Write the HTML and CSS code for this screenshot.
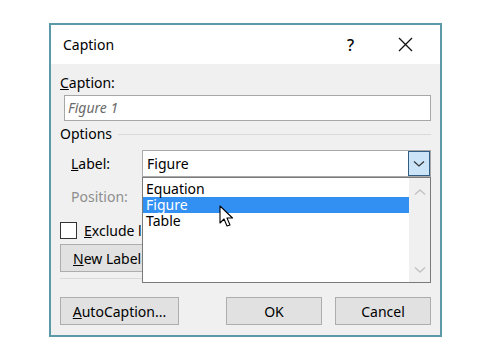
FILE: index.html
```html
<!DOCTYPE html>
<html lang="en">

<head>
    <meta charset="UTF-8">
    <title>Caption</title>
    <link rel="stylesheet" href="styles.css">
</head>

<body>

    <div class="dialog">
        <!-- Title bar -->
        <div class="titlebar">
            <div class="title">Caption</div>
            <div class="help">?</div>
            <div class="close">
                <svg width="15" height="15" viewBox="0 0 15 15">
                    <path d="M1 1 L14 14 M14 1 L1 14" stroke="#111" stroke-width="1.3" fill="none" />
                </svg>
            </div>
        </div>

        <div class="content">
            <div class="field-label"><u>C</u>aption:</div>
            <div class="caption-input">Figure 1</div>

            <div class="group-title">
                <span>Options</span>
                <div class="group-line"></div>
            </div>

            <div class="options">
                <div class="row">
                    <div class="row-label"><u>L</u>abel:</div>
                    <div class="combo">
                        <div class="combo-text">Figure</div>
                        <div class="combo-button">
                            <svg width="12" height="8" viewBox="0 0 12 8">
                                <path d="M1 1.5 L6 6 L11 1.5" stroke="#333" stroke-width="1.2" fill="none" />
                            </svg>
                        </div>

                        <!-- Open drop-down list -->
                        <div class="dropdown">
                            <div class="items">
                                <div class="item">Equation</div>
                                <div class="item selected">Figure</div>
                                <div class="item">Table</div>
                            </div>
                            <div class="scrollbar">
                                <svg width="12" height="8" viewBox="0 0 12 8">
                                    <path d="M1 6.5 L6 2 L11 6.5" stroke="#c2c2c2" stroke-width="1.4" fill="none" />
                                </svg>
                                <svg width="12" height="8" viewBox="0 0 12 8">
                                    <path d="M1 1.5 L6 6 L11 1.5" stroke="#c2c2c2" stroke-width="1.4" fill="none" />
                                </svg>
                            </div>
                        </div>

                        <!-- Mouse pointer -->
                        <svg class="cursor" width="16" height="24" viewBox="0 0 16 24">
                            <path d="M1 1 L1 18 L5 14 L8 21 L11 20 L8 13 L13.5 13 Z" fill="#fff" stroke="#000" stroke-width="1.1" stroke-linejoin="round" />
                        </svg>
                    </div>
                </div>

                <div class="row position-row">
                    <div class="row-label disabled">Position:</div>
                </div>
            </div>

            <div class="check-row">
                <div class="checkbox"></div>
                <span><u>E</u>xclude label from caption</span>
            </div>

            <div class="label-buttons">
                <button class="btn new-label"><u>N</u>ew Label...</button>
            </div>

            <div class="separator"></div>

            <div class="footer">
                <button class="btn auto-btn"><u>A</u>utoCaption...</button>
                <div class="spacer"></div>
                <button class="btn ok-btn">OK</button>
                <button class="btn cancel-btn">Cancel</button>
            </div>
        </div>
    </div>

</body>

</html>
```

FILE: styles.css
```css
/* Page */
body {
    margin: 0;
    background-color: #ffffff;
    font-family: "Noto Sans", "Open Sans", sans-serif;
    font-size: 14px;
    color: #000;
}

/* Dialog window */
.dialog {
    margin: 23px 0 0 49px;
    width: 389px;
    height: 310px;
    border: 2px solid #5d9aa9;
    background-color: #f0f0f0;
    display: flex;
    flex-direction: column;
}

.titlebar {
    height: 39px;
    background-color: #ffffff;
    display: flex;
    align-items: center;
    padding-left: 12px;
}

.title {
    flex: 1;
    font-size: 14px;
}

.help {
    width: 14px;
    margin-right: 37px;
    font-size: 16px;
    font-weight: 500;
}

.close {
    width: 15px;
    height: 15px;
    margin-right: 27px;
}

/* Main area */
.content {
    padding: 9px 9px 0 9px;
    display: flex;
    flex-direction: column;
}

.field-label {
    line-height: 20px;
}

.caption-input {
    margin: 2px 0 0 4px;
    height: 24px;
    line-height: 24px;
    border: 1px solid #a7a7a7;
    background-color: #fff;
    padding-left: 3px;
    font-style: italic;
    color: #6a6a6a;
}

.group-title {
    display: flex;
    align-items: center;
    gap: 6px;
    margin-top: 3px;
    line-height: 20px;
}

.group-line {
    flex: 1;
    height: 1px;
    background-color: #dadada;
}

.options {
    padding-left: 11px;
    margin-top: 6px;
}

.row {
    display: flex;
    align-items: center;
    height: 27px;
}

.row-label {
    width: 71px;
}

.disabled {
    color: #8d8d8d;
}

.position-row {
    margin-top: 6px;
}

/* Combo box */
.combo {
    position: relative;
    width: 287px;
    height: 25px;
    border: 1px solid #a9a9a9;
    background-color: #fff;
    display: flex;
    align-items: center;
}

.combo-text {
    flex: 1;
    padding-left: 4px;
}

.combo-button {
    width: 20px;
    height: 23px;
    background-color: #cce4f7;
    border: 1px solid #2f5d85;
    display: flex;
    align-items: center;
    justify-content: center;
}

/* Open list, lies over the dialog */
.dropdown {
    position: absolute;
    top: 26px;
    left: -1px;
    width: 287px;
    height: 104px;
    border: 1px solid #7a7a7a;
    background-color: #fff;
    display: flex;
    z-index: 5;
}

.items {
    flex: 1;
    padding-top: 3px;
}

.item {
    height: 16px;
    line-height: 16px;
    padding-left: 3px;
}

.item.selected {
    background-color: #3390f3;
    color: #fff;
}

.scrollbar {
    width: 21px;
    background-color: #f0f0f0;
    display: flex;
    flex-direction: column;
    justify-content: space-between;
    align-items: center;
    padding: 10px 0 8px;
}

.cursor {
    position: absolute;
    top: 54px;
    left: 76px;
    z-index: 6;
}

/* Checkbox */
.check-row {
    display: flex;
    align-items: center;
    gap: 7px;
    margin-top: 11px;
    height: 18px;
}

.checkbox {
    width: 15px;
    height: 15px;
    border: 1px solid #333;
    background-color: #fff;
}

/* Buttons */
.btn {
    font-family: inherit;
    font-size: 14px;
    color: #000;
    background-color: #e1e1e1;
    border: 1px solid #adadad;
    height: 28px;
    padding: 0;
}

.label-buttons {
    display: flex;
    margin-top: 5px;
}

.new-label {
    width: 110px;
    text-align: left;
    padding-left: 12px;
}

.separator {
    height: 1px;
    background-color: #d9d9d9;
    margin-top: 6px;
}

.footer {
    display: flex;
    gap: 13px;
    margin-top: 18px;
}

.auto-btn {
    width: 119px;
}

.spacer {
    flex: 1;
}

.ok-btn,
.cancel-btn {
    width: 96px;
}
```
